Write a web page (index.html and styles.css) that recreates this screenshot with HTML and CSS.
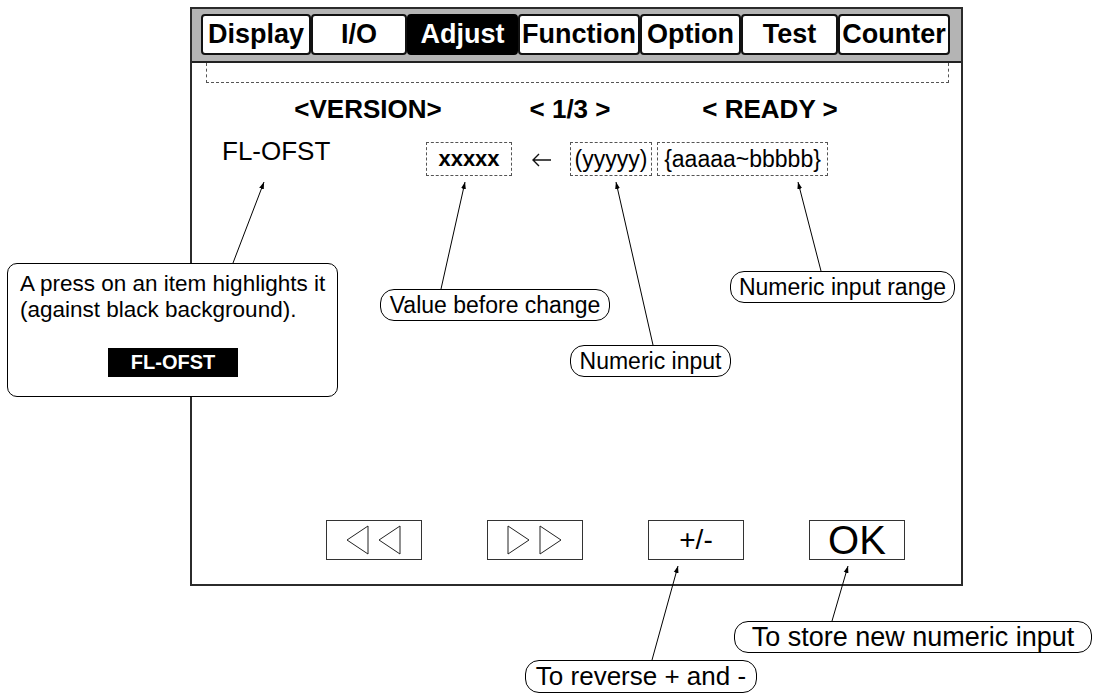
FILE: index.html
```html
<!DOCTYPE html>
<html lang="en">
<head>
    <meta charset="UTF-8">
    <meta name="viewport" content="width=device-width, initial-scale=1.0">
    <title>Adjust Screen</title>
    <link rel="stylesheet" href="styles.css">
</head>
<body>
    <div class="sheet">
        <div class="screen">
            <div class="tabbar">
                <div class="tab tab-display">Display</div>
                <div class="tab tab-io">I/O</div>
                <div class="tab tab-adjust active">Adjust</div>
                <div class="tab tab-function">Function</div>
                <div class="tab tab-option">Option</div>
                <div class="tab tab-test">Test</div>
                <div class="tab tab-counter">Counter</div>
            </div>
            <div class="memo"></div>

            <div class="status">
                <span class="status-version">&lt;VERSION&gt;</span>
                <span class="status-page">&lt; 1/3 &gt;</span>
                <span class="status-state">&lt; READY &gt;</span>
            </div>

            <div class="item-row">
                <span class="item-name">FL-OFST</span>
                <span class="field field-old">xxxxx</span>
                <span class="arrow">
                    <svg width="22" height="16" viewBox="0 0 22 16">
                        <path d="M2 8 H20 M8 2 L2 8 L8 14" fill="none" stroke="#111" stroke-width="1.4"/>
                    </svg>
                </span>
                <span class="field field-new">(yyyyy)</span>
                <span class="field field-range">{aaaaa~bbbbb}</span>
            </div>

            <div class="keys">
                <div class="key">
                    <svg width="56" height="30" viewBox="0 0 56 30">
                        <path d="M1 15 L22 1 V29 Z M33 15 L54 1 V29 Z" fill="none" stroke="#222" stroke-width="1"/>
                    </svg>
                </div>
                <div class="key">
                    <svg width="56" height="30" viewBox="0 0 56 30">
                        <path d="M1 1 L22 15 L1 29 Z M33 1 L54 15 L33 29 Z" fill="none" stroke="#222" stroke-width="1"/>
                    </svg>
                </div>
                <div class="key key-sign">+/-</div>
                <div class="key key-ok">OK</div>
            </div>
        </div>

        <!-- leader lines of the callouts -->
        <svg class="leaders" width="1094" height="695" viewBox="0 0 1094 695">
            <defs>
                <marker id="tip" viewBox="0 0 10 10" refX="10" refY="5" markerWidth="7" markerHeight="7" orient="auto">
                    <path d="M0 1.5 L10 5 L0 8.5 Z" fill="#000"/>
                </marker>
            </defs>
            <g stroke="#000" stroke-width="1" marker-end="url(#tip)">
                <line x1="233" y1="263" x2="264" y2="182"/>
                <line x1="441" y1="289" x2="465" y2="182"/>
                <line x1="653" y1="345" x2="616" y2="182"/>
                <line x1="821" y1="271" x2="798" y2="182"/>
                <line x1="652" y1="660" x2="678" y2="566"/>
                <line x1="832" y1="621" x2="848" y2="566"/>
            </g>
        </svg>

        <div class="note">
            <p>A press on an item highlights it<br>(against black background).</p>
            <span class="sample">FL-OFST</span>
        </div>

        <div class="tag tag-before">Value before change</div>
        <div class="tag tag-input">Numeric input</div>
        <div class="tag tag-range">Numeric input range</div>
        <div class="tag tag-store">To store new numeric input</div>
        <div class="tag tag-reverse">To reverse + and -</div>
    </div>
</body>
</html>
```

FILE: styles.css
```css
body {
    margin: 0;
    font-family: "Liberation Sans", Arial, sans-serif;
    color: #000;
    background-color: #fff;
}

.sheet {
    position: relative;
    width: 1094px;
    height: 695px;
    overflow: hidden;
}

/* the panel screen */
.screen {
    width: 773px;
    height: 579px;
    margin: 7px 0 0 190px;
    border: 2px solid #2b2b2b;
    box-sizing: border-box;
    display: flex;
    flex-direction: column;
}

.tabbar {
    display: flex;
    background-color: #b4b4b4;
    padding: 5px 0 6px 9px;
    border-bottom: 2px solid #222;
}

.tab {
    height: 41px;
    box-sizing: border-box;
    border: 2px solid #111;
    border-radius: 4px;
    background-color: #fff;
    font-size: 27px;
    font-weight: bold;
    display: flex;
    align-items: center;
    justify-content: center;
}

.tab-display { width: 110px; }
.tab-io { width: 96px; }
.tab-adjust { width: 111px; }
.tab-function { width: 122px; }
.tab-option { width: 101px; }
.tab-test { width: 97px; }
.tab-counter { width: 112px; }

.tab.active {
    background-color: #000;
    border-color: #000;
    color: #fff;
}

.memo {
    height: 20px;
    margin: 0 12px 0 14px;
    border: 1px dashed #555;
    border-top: none;
    box-sizing: border-box;
}

.status {
    display: flex;
    margin-top: 11px;
    padding-left: 76px;
    font-size: 26px;
    font-weight: bold;
    line-height: 30px;
}

.status span {
    text-align: center;
    white-space: pre;
}

.status-version { width: 200px; }
.status-page { width: 204px; }
.status-state { width: 196px; }

.item-row {
    display: flex;
    align-items: flex-start;
    margin-top: 18px;
    padding-left: 30px;
}

.item-name {
    width: 204px;
    font-size: 26px;
    line-height: 30px;
    margin-top: -6px;
}

.field {
    height: 34px;
    box-sizing: border-box;
    border: 1px dashed #555;
    font-size: 23px;
    display: flex;
    align-items: center;
    justify-content: center;
}

.field-old {
    width: 86px;
    font-size: 22px;
    font-weight: bold;
}

.field-new { width: 82px; }

.field-range {
    width: 171px;
    margin-left: 5px;
}

.arrow {
    width: 58px;
    height: 34px;
    display: flex;
    align-items: center;
    justify-content: center;
    padding: 1px 0 0 2px;
    box-sizing: border-box;
}

.keys {
    display: flex;
    gap: 65px;
    margin-top: auto;
    margin-bottom: 24px;
    padding-left: 134px;
}

.key {
    width: 96px;
    height: 40px;
    box-sizing: border-box;
    border: 1px solid #333;
    display: flex;
    align-items: center;
    justify-content: center;
}

.key-sign {
    font-size: 28px;
}

.key-ok {
    font-size: 40px;
    line-height: 40px;
}

/* callouts */
.leaders {
    position: absolute;
    left: 0;
    top: 0;
}

.note {
    position: absolute;
    left: 7px;
    top: 263px;
    width: 331px;
    height: 134px;
    box-sizing: border-box;
    border: 1px solid #000;
    border-radius: 10px;
    background-color: #fff;
    padding: 7px 0 0 12px;
}

.note p {
    margin: 0;
    font-size: 22.5px;
    line-height: 26px;
}

.sample {
    display: block;
    width: 130px;
    height: 29px;
    margin: 25px 0 0 88px;
    background-color: #000;
    color: #fff;
    font-size: 20px;
    font-weight: bold;
    line-height: 29px;
    text-align: center;
}

.tag {
    position: absolute;
    height: 32px;
    box-sizing: border-box;
    border: 1px solid #000;
    border-radius: 14px;
    background-color: #fff;
    font-size: 23px;
    display: flex;
    align-items: center;
    justify-content: center;
    white-space: nowrap;
}

.tag-before {
    left: 380px;
    top: 289px;
    width: 230px;
}

.tag-input {
    left: 570px;
    top: 345px;
    width: 161px;
}

.tag-range {
    left: 730px;
    top: 271px;
    width: 225px;
}

.tag-store {
    left: 734px;
    top: 621px;
    width: 358px;
    font-size: 27px;
}

.tag-reverse {
    left: 525px;
    top: 660px;
    width: 232px;
    height: 33px;
    font-size: 26px;
}
```
